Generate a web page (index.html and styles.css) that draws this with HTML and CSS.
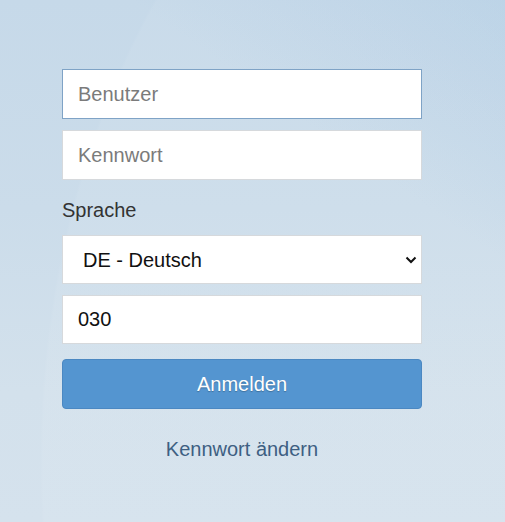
FILE: index.html
```html
<!DOCTYPE html>
<html lang="de">
<head>
<meta charset="utf-8">
<title>Anmelden</title>
<link rel="stylesheet" href="styles.css">
</head>
<body>
<div class="bg">
  <form class="login">
    <input class="field focus" type="text" placeholder="Benutzer">
    <input class="field" type="password" placeholder="Kennwort">
    <label class="label">Sprache</label>
    <div class="select-wrap">
      <select class="field select">
        <option>DE - Deutsch</option>
      </select>
      <svg class="chev" width="12" height="8" viewBox="0 0 12 8"><path d="M1.5 1.5 L6 6 L10.5 1.5" fill="none" stroke="#111" stroke-width="2"/></svg>
    </div>
    <input class="field mandant" type="text" value="030">
    <button class="btn" type="button">Anmelden</button>
    <a class="link" href="#">Kennwort ändern</a>
  </form>
</div>
</body>
</html>
```
FILE: styles.css
```css
html, body {
  margin: 0;
  padding: 0;
  height: 100%;
}
body {
  font-family: "Liberation Sans", Arial, sans-serif;
  font-size: 20px;
}
.bg {
  min-height: 522px;
  background:
    radial-gradient(ellipse 560px 760px at 600px 460px, rgba(255,255,255,0.06) 0 99.5%, rgba(255,255,255,0) 100%),
    linear-gradient(215deg, rgba(160,195,225,0.35) 0%, rgba(160,195,225,0) 30%),
    linear-gradient(180deg, #c6d9e9 0%, #cbdcea 40%, #d3e1ec 75%, #d5e2ed 100%);
  box-sizing: border-box;
  padding: 69px 0 0 62px;
}
.login {
  width: 360px;
  display: flex;
  flex-direction: column;
}
.field {
  box-sizing: border-box;
  width: 360px;
  height: 50px;
  border: 1px solid #d6d9dc;
  background: #fff;
  font-family: "Liberation Sans", Arial, sans-serif;
  font-size: 20px;
  color: #111;
  padding: 0 15px;
  margin: 0 0 11px 0;
  outline: none;
  border-radius: 0;
}
.field::placeholder {
  color: #7b7b7b;
}
.focus {
  border-color: #7fa3c6;
}
.label {
  color: #333;
  margin: 7px 0 13px 0;
  line-height: 24px;
}
.select-wrap {
  position: relative;
  height: 49px;
  margin-bottom: 11px;
}
.select {
  appearance: none;
  -webkit-appearance: none;
  height: 49px;
  padding-left: 20px;
  margin: 0;
}
.chev {
  position: absolute;
  right: 5px;
  top: 21px;
  pointer-events: none;
}
.mandant {
  height: 49px;
  margin-bottom: 15px;
}
.btn {
  box-sizing: border-box;
  width: 360px;
  height: 50px;
  background: #5495d0;
  border: 1px solid #4b88c2;
  border-radius: 4px;
  color: #fff;
  font-family: "Liberation Sans", Arial, sans-serif;
  font-size: 20px;
  text-shadow: 0 1px 1px rgba(0,0,0,0.25);
  padding: 0;
}
.link {
  align-self: center;
  margin-top: 28px;
  color: #3e5f82;
  text-decoration: none;
  line-height: 24px;
}
```
